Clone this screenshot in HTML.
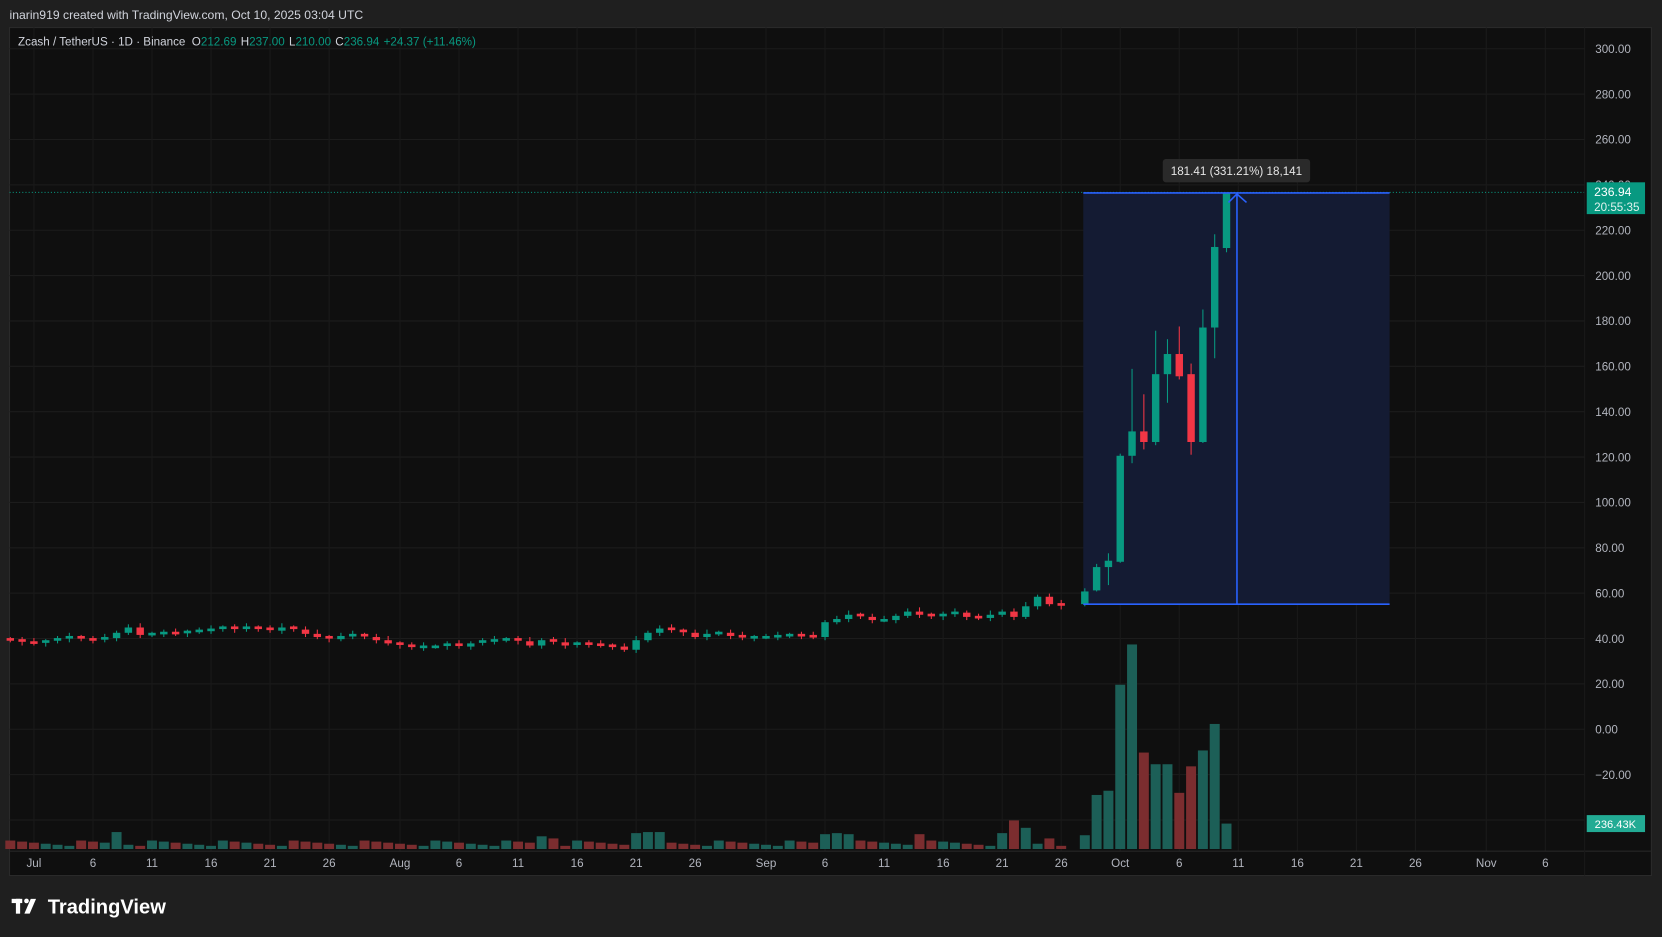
<!DOCTYPE html>
<html><head><meta charset="utf-8"><style>
html,body{margin:0;padding:0;background:#1f1f1f;overflow:hidden}
svg{display:block;font-family:"Liberation Sans",sans-serif}
</style></head><body>
<svg id="s" width="1662" height="937" viewBox="0 0 1568 884" xmlns="http://www.w3.org/2000/svg">
<rect width="1568" height="884" fill="#1f1f1f"/>
<text x="9" y="18" fill="#d1d4dc" font-size="11.5">inarin919 created with TradingView.com, Oct 10, 2025 03:04 UTC</text>
<rect x="9" y="26" width="1549" height="800" fill="#0f0f0f" stroke="#2a2a2a" stroke-width="1"/>
<g id="grid"></g>
<rect x="1022" y="182" width="289" height="388" fill="#141b33"/>
<g id="vol"></g>
<g id="candles"></g>
<line x1="9" y1="181.5" x2="1497" y2="181.5" stroke="#089981" stroke-dasharray="1,2" stroke-width="1"/>
<line x1="1022" y1="182" x2="1311" y2="182" stroke="#2962ff" stroke-width="1.5"/>
<line x1="1022" y1="570" x2="1311" y2="570" stroke="#2962ff" stroke-width="1.5"/>
<line x1="1167" y1="570" x2="1167" y2="183" stroke="#2962ff" stroke-width="1.5"/>
<path d="M1159 191 L1167 183 L1176 191" fill="none" stroke="#2962ff" stroke-width="1.5"/>
<rect x="1097" y="150" width="139" height="22" rx="3" fill="#2a2a2a"/>
<text x="1166.5" y="165" fill="#e6e6e6" font-size="11" text-anchor="middle">181.41 (331.21%) 18,141</text>
<line x1="9" y1="803" x2="1558" y2="803" stroke="#2a2a2a"/>
<line x1="1495" y1="26" x2="1495" y2="826" stroke="#1a1a1a"/>
<g id="axis" fill="#b2b5be" font-size="11"></g>
<rect x="1497" y="172" width="55" height="30" fill="#089981"/>
<text x="1504" y="185" fill="#fff" font-size="11.5">236.94</text>
<text x="1504" y="199" fill="#e0f2ee" font-size="11">20:55:35</text>
<rect x="1497" y="769" width="55" height="16" fill="#22ab94"/>
<text x="1524" y="781" fill="#fff" font-size="10.5" text-anchor="middle">236.43K</text>
<text x="17" y="43" font-size="11" fill="#d1d4dc">Zcash / TetherUS · 1D · Binance <tspan dx="3">O</tspan><tspan fill="#089981">212.69</tspan><tspan dx="4">H</tspan><tspan fill="#089981">237.00</tspan><tspan dx="4">L</tspan><tspan fill="#089981">210.00</tspan><tspan dx="4">C</tspan><tspan fill="#089981">236.94</tspan><tspan dx="4" fill="#089981">+24.37 (+11.46%)</tspan></text>
<g fill="#fff"><rect x="11" y="848" width="10" height="4"/><rect x="15" y="848" width="4" height="14"/><circle cx="25" cy="850" r="2.2"/><path d="M29 848 h5 l-6 14 h-5 z"/></g>
<text x="45" y="862" fill="#fff" font-size="19" font-weight="bold">TradingView</text>
</svg>
<script>
const NS="http://www.w3.org/2000/svg";
function el(p,t,a,txt){const e=document.createElementNS(NS,t);for(const k in a)e.setAttribute(k,a[k]);if(txt!=null)e.textContent=txt;document.getElementById(p).appendChild(e);}
const X=d=>32+d*11.14, Y=p=>46+(300-p)*2.14;
for(let p=300;p>=-40;p-=20){const y=Y(p);if(y>800)continue;el("grid","line",{x1:9,x2:1495,y1:y,y2:y,stroke:"#1c1c1c"});
 if(p>-40)el("axis","text",{x:1505,y:y+4},(p<0?"\u2212"+(-p).toFixed(2):p.toFixed(2)));}
const labs=[[0,"Jul"],[5,"6"],[10,"11"],[15,"16"],[20,"21"],[25,"26"],[31,"Aug"],[36,"6"],[41,"11"],[46,"16"],[51,"21"],[56,"26"],[62,"Sep"],[67,"6"],[72,"11"],[77,"16"],[82,"21"],[87,"26"],[92,"Oct"],[97,"6"],[102,"11"],[107,"16"],[112,"21"],[117,"26"],[123,"Nov"],[128,"6"]];
labs.forEach(([d,t])=>{const x=X(d);el("grid","line",{x1:x,x2:x,y1:26,y2:803,stroke:"#1a1a1a"});el("axis","text",{x:x,y:818,"text-anchor":"middle"},t);});
const closes=[604,606,607,605,603,601,603,604,602,597,592,599,598,597,598,596,595,594,592,594,592,593,595,592,594,598,601,603,600,599,601,604,607,609,611,610,610,608,610,607,605,604,603,605,609,604,606,609,607,608,609,610,613,604,597,593,595,597,601,598,597,600,602,601,601,600,599,600,601,587,584,580,582,585,585,581,577,580,582,580,578,582,583,580,577,582,572,563,570,572];
let data=[];let prev=603;
closes.forEach((c,i)=>{const d=i-2;const o=prev;data.push([d,o,c,Math.min(o,c)-2-(i%3),Math.max(o,c)+2+(i%2)]);prev=c;});
data.push([89,570,558,555,572],[90,557,535,532,558],[91,535,529,522,552],[92,530,430,428,531],[93,430,407,348,437],[94,407,417,372,424],[95,417,353,312,420],[96,353,334,320,380],[97,334,355,308,358],[98,353,417,343,429],[99,417,309,292,418],[100,309,233,221,338],[101,234,182,182,238]);
data.forEach(([d,o,c,h,l])=>{const x=X(d);const g=c<=o;const col=g?"#089981":"#f23645";
 el("candles","line",{x1:x,x2:x,y1:h,y2:l,stroke:col,"stroke-width":1});
 const hh=Math.max(2.5,Math.abs(o-c));
 el("candles","rect",{x:x-3.5,y:Math.min(o,c)-(hh>Math.abs(o-c)?1:0),width:7,height:hh,fill:col});});
const big={7:785,43:789,44:791,51:786,52:785,53:785,67:787,68:786,69:787,75:787,82:786,83:774,84:781,85:796,86:791,88:797,89:788,90:750,91:746,92:646,93:608,94:710,95:721,96:721,97:748,98:723,99:708,100:683,101:777};
data.forEach(([d,o,c],i)=>{const x=X(d);const g=c<=o;let top=big[d]||(793+((i*7)%6));
 el("vol","rect",{x:x-4.7,y:top,width:9.4,height:801-top,fill:g?"#1c5f57":"#7b2d2f"});});
</script>
</body></html>
